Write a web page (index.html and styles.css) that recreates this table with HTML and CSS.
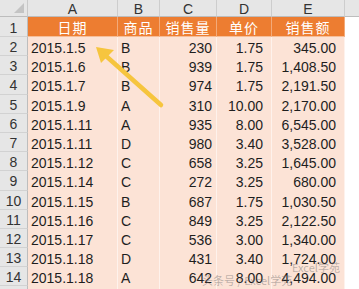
FILE: index.html
```html
<!DOCTYPE html>
<html>
<head>
<meta charset="utf-8">
<link rel="stylesheet" href="styles.css">
</head>
<body>
<div class="sheet">
  <div class="grid">
    <div class="corner"><span class="tri"></span></div>
    <div class="colh">A</div><div class="colh">B</div><div class="colh">C</div><div class="colh">D</div><div class="colh">E</div><div class="colh rest"></div>

    <div class="rowh r1">1</div>
    <div class="th">日期</div><div class="th">商品</div><div class="th">销售量</div><div class="th">单价</div><div class="th">销售额</div><div class="blank"></div>

    <div class="rowh">2</div><div class="td a">2015.1.5</div><div class="td b">B</div><div class="td c">230</div><div class="td d">1.75</div><div class="td e">345.00</div><div class="blank"></div>
    <div class="rowh">3</div><div class="td a">2015.1.6</div><div class="td b">B</div><div class="td c">939</div><div class="td d">1.75</div><div class="td e">1,408.50</div><div class="blank"></div>
    <div class="rowh">4</div><div class="td a">2015.1.7</div><div class="td b">B</div><div class="td c">974</div><div class="td d">1.75</div><div class="td e">2,191.50</div><div class="blank"></div>
    <div class="rowh">5</div><div class="td a">2015.1.9</div><div class="td b">A</div><div class="td c">310</div><div class="td d">10.00</div><div class="td e">2,170.00</div><div class="blank"></div>
    <div class="rowh">6</div><div class="td a">2015.1.11</div><div class="td b">A</div><div class="td c">935</div><div class="td d">8.00</div><div class="td e">6,545.00</div><div class="blank"></div>
    <div class="rowh">7</div><div class="td a">2015.1.11</div><div class="td b">D</div><div class="td c">980</div><div class="td d">3.40</div><div class="td e">3,528.00</div><div class="blank"></div>
    <div class="rowh">8</div><div class="td a">2015.1.12</div><div class="td b">C</div><div class="td c">658</div><div class="td d">3.25</div><div class="td e">1,645.00</div><div class="blank"></div>
    <div class="rowh">9</div><div class="td a">2015.1.14</div><div class="td b">C</div><div class="td c">272</div><div class="td d">3.25</div><div class="td e">680.00</div><div class="blank"></div>
    <div class="rowh">10</div><div class="td a">2015.1.15</div><div class="td b">B</div><div class="td c">687</div><div class="td d">1.75</div><div class="td e">1,030.50</div><div class="blank"></div>
    <div class="rowh">11</div><div class="td a">2015.1.16</div><div class="td b">C</div><div class="td c">849</div><div class="td d">3.25</div><div class="td e">2,122.50</div><div class="blank"></div>
    <div class="rowh">12</div><div class="td a">2015.1.17</div><div class="td b">C</div><div class="td c">536</div><div class="td d">3.00</div><div class="td e">1,340.00</div><div class="blank"></div>
    <div class="rowh">13</div><div class="td a">2015.1.18</div><div class="td b">D</div><div class="td c">431</div><div class="td d">3.40</div><div class="td e">1,724.00</div><div class="blank"></div>
    <div class="rowh">14</div><div class="td a">2015.1.18</div><div class="td b">A</div><div class="td c">642</div><div class="td d">8.00</div><div class="td e">4,494.00</div><div class="blank"></div>
    <div class="rowh"></div><div class="td a"></div><div class="td b"></div><div class="td c"></div><div class="td d"></div><div class="td e"></div><div class="blank"></div>
  </div>

  <svg class="arrow" width="359" height="289" viewBox="0 0 359 289">
    <line x1="161" y1="105" x2="106" y2="56" stroke="#f6c53e" stroke-width="4.5" stroke-linecap="round"/>
    <polygon points="96,47 114,50 101,63" fill="#f6c53e"/>
  </svg>

  <div class="watermark"><span class="wm-top">Excel学苑</span><span class="wm-bot">头条号 / Excel学苑</span></div>
</div>
</body>
</html>
```

FILE: styles.css
```css
html, body {
  margin: 0;
  padding: 0;
  background: #ffffff;
}
body {
  width: 359px;
  height: 289px;
  overflow: hidden;
  font-family: "Liberation Sans", Arial, "Noto Sans CJK SC", sans-serif;
}
.sheet {
  position: relative;
  width: 359px;
  height: 289px;
  overflow: hidden;
}
.grid {
  display: grid;
  grid-template-columns: 28px 90px 42px 57px 55px 73px 14px;
  grid-template-rows: 17px 20px;
  grid-auto-rows: 19.2px;
}
.grid > div {
  box-sizing: border-box;
  font-size: 14px;
  line-height: 1;
  display: flex;
  align-items: center;
  white-space: nowrap;
}
.corner {
  background: #e6e6e6;
  border-right: 1px solid #c9c9c9;
  border-bottom: 1px solid #bdbdbd;
  position: relative;
}
.tri {
  position: absolute;
  right: 3px;
  bottom: 3px;
  width: 0;
  height: 0;
  border-left: 10px solid transparent;
  border-bottom: 10px solid #c4c4c4;
}
.colh {
  background: #e6e6e6;
  color: #333;
  justify-content: center;
  border-right: 1px solid #cdcdcd;
  border-bottom: 1px solid #bdbdbd;
  padding-top: 1px;
}
.colh.rest {
  border-right: none;
}
.rowh {
  background: #e6e6e6;
  color: #333;
  justify-content: center;
  border-right: 1px solid #bdbdbd;
  border-bottom: 1px solid #d2d2d2;
  padding-top: 2px;
}
.th {
  background: #ed7d31;
  color: #ffffff;
  justify-content: center;
  font-family: "Noto Sans CJK SC", sans-serif;
  font-size: 14px;
  border-right: 1px solid rgba(255, 255, 255, 0.35);
  border-bottom: 1px solid rgba(255, 255, 255, 0.5);
  letter-spacing: 1px;
}
.td {
  background: #fce3d6;
  color: #1e1e1e;
  border-right: 1px solid rgba(255, 255, 255, 0.55);
  padding-top: 3px;
}
.td.a { padding-left: 3px; }
.td.b { padding-left: 3px; }
.td.c { justify-content: flex-end; padding-right: 4px; }
.td.d { justify-content: flex-end; padding-right: 8px; }
.td.e { justify-content: flex-end; padding-right: 8px; }
.blank {
  background: #ffffff;
}
.arrow {
  position: absolute;
  left: 0;
  top: 0;
  pointer-events: none;
}
.watermark {
  position: absolute;
  left: 262px;
  top: 262px;
  display: flex;
  flex-direction: column;
  font-family: "Noto Sans CJK SC", sans-serif;
  color: rgba(110, 110, 110, 0.45);
  line-height: 1;
}
.wm-top {
  font-size: 11px;
  padding-left: 30px;
}
.wm-bot {
  font-size: 11px;
  margin-top: 2px;
  margin-left: -60px;
}
```
